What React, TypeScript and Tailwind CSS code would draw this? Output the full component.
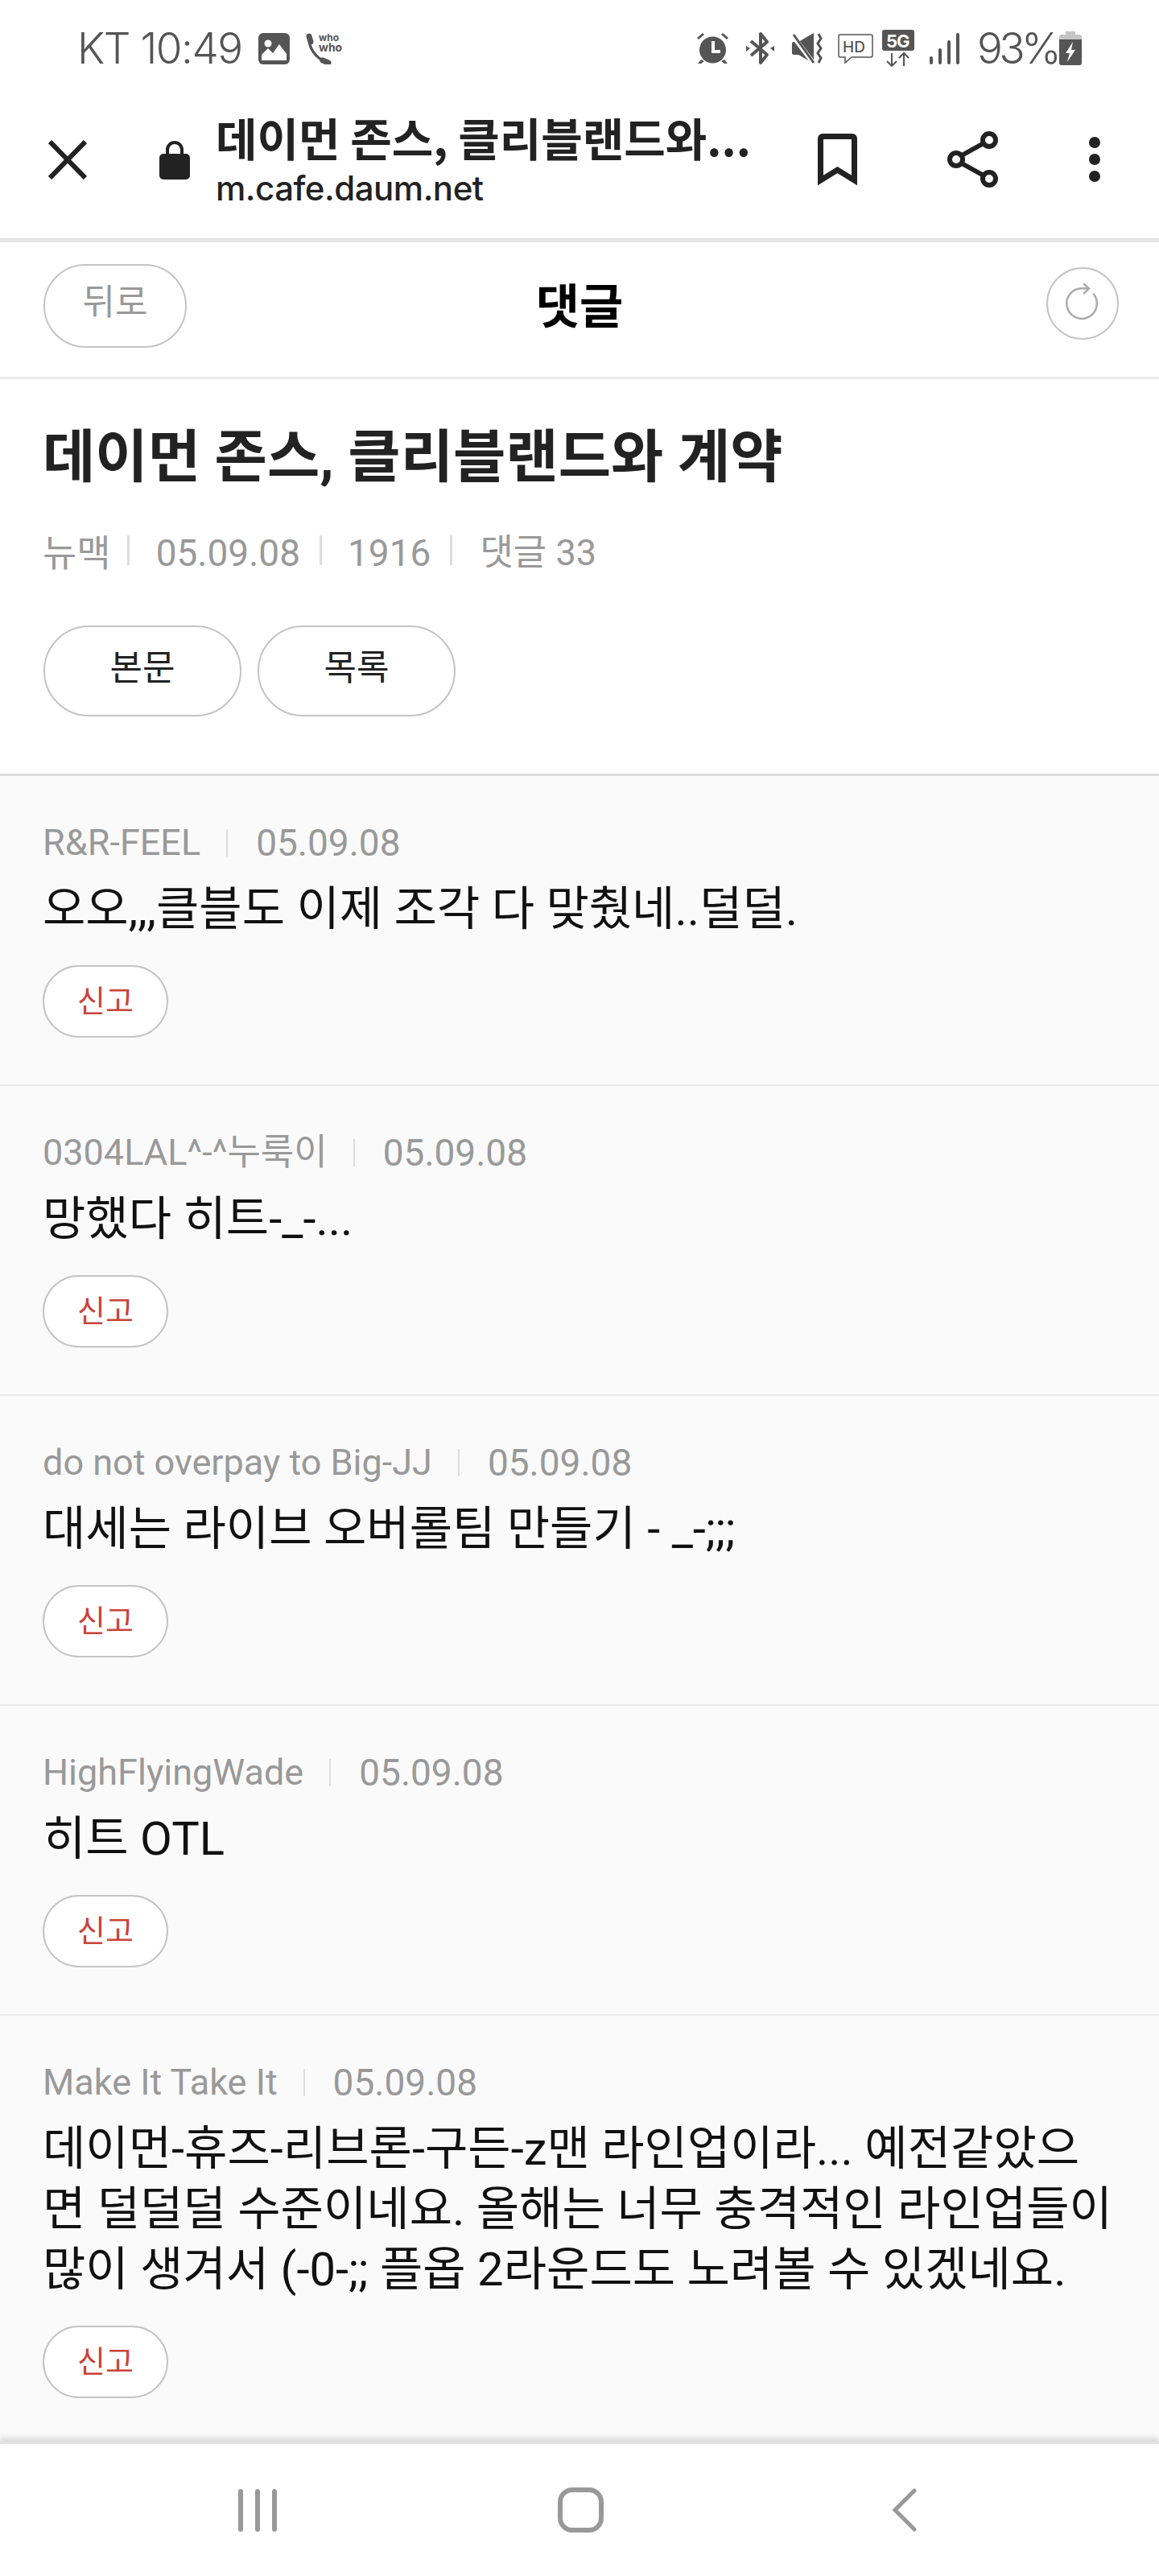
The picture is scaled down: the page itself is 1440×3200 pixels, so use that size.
const kr = "font-['Roboto','Noto_Sans_CJK_KR',sans-serif]";

interface Comment {
  author: string;
  body: string[];
}

const comments: Comment[] = [
  { author: "R&R-FEEL", body: ["오오,,,클블도 이제 조각 다 맞췄네..덜덜."] },
  { author: "0304LAL^-^누룩이", body: ["망했다 히트-_-..."] },
  { author: "do not overpay to Big-JJ", body: ["대세는 라이브 오버롤팀 만들기 - _-;;;"] },
  { author: "HighFlyingWade", body: ["히트 OTL"] },
  {
    author: "Make It Take It",
    body: [
      "데이먼-휴즈-리브론-구든-z맨 라인업이라... 예전같았으",
      "면 덜덜덜 수준이네요. 올해는 너무 충격적인 라인업들이",
      "많이 생겨서 (-0-;; 플옵 2라운드도 노려볼 수 있겠네요.",
    ],
  },
];

function StatusBar() {
  return (
    <div className="flex h-[118px] items-center justify-between pl-[96px] pr-[96px] pt-[2px] font-['Inter','Noto_Sans_CJK_KR',sans-serif] text-[#555]">
      <div className="flex items-center">
        <span className="w-[202px] whitespace-nowrap text-[53px] font-light leading-none tracking-[-1.5px]">KT 10:49</span>
        {/* gallery */}
        <svg className="ml-[23px]" width="39" height="39" viewBox="0 0 39 39" fill="#555">
          <rect width="39" height="39" rx="6" />
          <circle cx="12" cy="13" r="4.5" fill="#fff" />
          <path d="M4 34V27l8-8 6 6 8-11 9 12v8z" fill="#fff" />
        </svg>
        {/* whowho */}
        <svg className="ml-[20px]" width="50" height="40" viewBox="0 0 50 40" fill="none" stroke="#555">
          <path d="M5 6C2 18 12 32 25 37" strokeWidth="3.5" />
          <path d="M4 5l2 7M21 35l7 3" strokeWidth="7" strokeLinecap="round" />
          <text x="16" y="11" fontSize="12" fontWeight="700" fill="#555" stroke="none">who</text>
          <text x="16" y="24" fontSize="14" fontWeight="700" fill="#555" stroke="none">who</text>
        </svg>
      </div>
      <div className="flex items-center">
        {/* alarm */}
        <svg width="41" height="40" viewBox="0 0 41 40" fill="#555">
          <circle cx="20.5" cy="22" r="16.5" />
          <path d="M19 11h4v11h7v4H19z" fill="#fff" />
          <path d="M1 7l7-6 2 2-7 6zM40 7l-7-6-2 2 7 6zM6 34l-4 5h4l4-3zM35 34l4 5h-4l-4-3z" />
        </svg>
        {/* bluetooth */}
        <svg className="ml-[21px]" width="35" height="42" viewBox="0 0 35 42" fill="#555">
          <path d="M6 12l20 17-8 10V3l8 10L6 30" fill="none" stroke="#555" strokeWidth="4" strokeLinejoin="round" />
          <path d="M0 18l5 3-5 4zM35 18l-5 3 5 4z" />
        </svg>
        {/* mute / vibrate */}
        <svg className="ml-[22px]" width="39" height="38" viewBox="0 0 39 38" fill="#555">
          <path d="M0 13a2 2 0 0 1 2-2h6L27 0v38L8 27H2a2 2 0 0 1-2-2z" />
          <path d="M0 2l27 36" stroke="#fff" strokeWidth="6" />
          <path d="M2 2l25 35" stroke="#555" strokeWidth="3" />
          <path d="M33 1l3 6-4 6 4 6-4 6 4 6-3 6" fill="none" stroke="#555" strokeWidth="3" />
        </svg>
        {/* hd */}
        <svg className="ml-[18px]" width="44" height="37" viewBox="0 0 44 37" fill="none" stroke="#555" strokeWidth="1.5">
          <path d="M3 1h38a2 2 0 0 1 2 2v24a2 2 0 0 1-2 2H17l-8 7v-7H3a2 2 0 0 1-2-2V3a2 2 0 0 1 2-2z" />
          <text x="6" y="23" fontSize="19" fontWeight="500" fill="#555" stroke="none">HD</text>
        </svg>
        {/* 5g */}
        <svg className="ml-[11px]" width="40" height="46" viewBox="0 0 40 46" fill="#555">
          <rect width="40" height="26" rx="3" />
          <text x="5" y="22" fontSize="22" fontWeight="700" fill="#fff" letterSpacing="-1">5G</text>
          <path d="M12 29v16M6 39l6 6 6-6M27 45V29M21 35l6-6 6 6" fill="none" stroke="#555" strokeWidth="2" />
        </svg>
        <div className="ml-[19px] flex h-[39px] items-end gap-[7px]">
          <span className="h-[10px] w-[4px] rounded-full bg-[#555]" />
          <span className="h-[20px] w-[4px] rounded-full bg-[#555]" />
          <span className="h-[30px] w-[4px] rounded-full bg-[#555]" />
          <span className="h-[39px] w-[4px] rounded-full bg-[#555]" />
        </div>
        <span className="ml-[22px] w-[94px] whitespace-nowrap text-[53px] font-light leading-none tracking-[-4.5px]">93%</span>
        {/* battery */}
        <svg className="ml-[8px]" width="28" height="42" viewBox="0 0 28 42" fill="#555">
          <path d="M8 0h12v4h5a3 3 0 0 1 3 3v4H0V7a3 3 0 0 1 3-3h5z" fill="#c4c4c4" />
          <path d="M0 10h28v29a3 3 0 0 1-3 3H3a3 3 0 0 1-3-3z" />
          <path d="M17 13L8 27h5l-3 11 10-15h-5z" fill="#fff" />
        </svg>
      </div>
    </div>
  );
}

function BrowserBar() {
  return (
    <div className="flex h-[183px] items-center border-b-[5px] border-[#e4e4e4] pb-[18px] text-[#222]">
      <svg className="ml-[60px] shrink-0" width="48" height="49" viewBox="0 0 48 49" fill="none" stroke="#222" strokeWidth="6">
        <path d="M2 2l44 45M46 2L2 47" />
      </svg>
      <svg className="ml-[90px] shrink-0" width="38" height="49" viewBox="0 0 38 49" fill="#222">
        <path d="M10 20v-8a9 9 0 0 1 18 0v8" fill="none" stroke="#222" strokeWidth="4" />
        <rect y="17" width="38" height="32" rx="5" />
      </svg>
      <div className="ml-[32px] w-[700px] shrink-0">
        <div className="whitespace-nowrap font-['Noto_Sans_CJK_KR',sans-serif] text-[56px] font-bold leading-[66px]">데이먼 존스, 클리블랜드와...</div>
        <div className="mt-[6px] font-['Inter',sans-serif] text-[42px] font-medium leading-[50px] tracking-[-0.5px]">m.cafe.daum.net</div>
      </div>
      <svg className="ml-[48px] shrink-0" width="49" height="64" viewBox="0 0 49 64" fill="none" stroke="#222" strokeWidth="7">
        <path d="M3.500 58V6a2.500 2.500 0 0 1 2.500-2.500h37a2.500 2.500 0 0 1 2.500 2.500v52L24.500 45z" />
      </svg>
      <svg className="ml-[112px] shrink-0" width="63" height="70" viewBox="0 0 63 70" fill="none" stroke="#222" strokeWidth="6">
        <circle cx="52" cy="11" r="8" />
        <circle cx="11" cy="35" r="8" />
        <circle cx="52" cy="59" r="8" />
        <path d="M18 30l27-15M18 40l27 15" />
      </svg>
      <div className="ml-[113px] flex flex-col gap-[7px]">
        <span className="h-[14px] w-[14px] rounded-full bg-[#222]" />
        <span className="h-[14px] w-[14px] rounded-full bg-[#222]" />
        <span className="h-[14px] w-[14px] rounded-full bg-[#222]" />
      </div>
    </div>
  );
}

function CommentRow({ comment }: { comment: Comment }) {
  return (
    <div className="border-b-2 border-[#ececec] px-[53px] pt-[58px] pb-[58px] last:border-b-0">
      <div className={`flex items-center text-[46px] leading-[50px] text-[#999] ${kr}`}>
        <span className="text-[45px]">{comment.author}</span>
        <span className="ml-[32px] mr-[35px] h-[34px] w-[2px] bg-[#ddd]" />
        <span>05.09.08</span>
      </div>
      <div className={`mt-[20px] whitespace-nowrap text-[58px] leading-[75px] text-[#111] ${kr}`}>
        {comment.body.map((line) => (
          <div key={line}>{line}</div>
        ))}
      </div>
      <button className={`mt-[32px] flex h-[90px] w-[156px] items-center justify-center rounded-[45px] border-2 border-[#c4c4c4] bg-white text-[38px] text-[#c9443c] ${kr}`}>
        신고
      </button>
    </div>
  );
}

export default function App() {
  return (
    <div className="flex h-[3200px] w-[1440px] flex-col overflow-hidden bg-white">
      <StatusBar />
      <BrowserBar />

      <div className="relative flex h-[170px] items-center justify-center border-b-[3px] border-[#ebebeb] pb-[4px]">
        <button className={`absolute left-[54px] top-[27px] h-[104px] w-[178px] rounded-[52px] border-2 border-[#c4c4c4] pb-[8px] text-[44px] text-[#999] ${kr}`}>뒤로</button>
        <span className={`text-[59px] font-bold text-black ${kr}`}>댓글</span>
        <div className="absolute left-[1300px] top-[31px] flex h-[90px] w-[90px] items-center justify-center rounded-full border-2 border-[#c4c4c4]">
          <svg width="46" height="50" viewBox="0 2 46 50" fill="none" stroke="#aaa" strokeWidth="2.500">
            <path d="M36.300 14.700A18.800 18.800 0 1 1 23 8.200H30" />
            <path d="M24 2l7 6.500-7 6.500" />
          </svg>
        </div>
      </div>

      <div className="border-b-[3px] border-[#dcdcdc] px-[53px] pb-[71px] pt-[54px]">
        <h1 className={`whitespace-nowrap text-[71px] font-bold leading-[86px] text-[#222] ${kr}`}>데이먼 존스, 클리블랜드와 계약</h1>
        <div className={`mt-[48px] flex items-center text-[46px] leading-[56px] text-[#999] ${kr}`}>
          <span>뉴맥</span>
          <span className="mb-[8px] ml-[20px] mr-[33px] h-[37px] w-[3px] bg-[#ddd]" />
          <span>05.09.08</span>
          <span className="mb-[8px] ml-[24px] mr-[32px] h-[37px] w-[3px] bg-[#ddd]" />
          <span>1916</span>
          <span className="mb-[8px] ml-[24px] mr-[34px] h-[37px] w-[3px] bg-[#ddd]" />
          <span className="text-[45px]">댓글 33</span>
        </div>
        <div className="mt-[62px] ml-[1px] flex gap-[20px]">
          <button className={`h-[113px] w-[246px] rounded-[57px] border-2 border-[#c4c4c4] pb-[8px] text-[44px] text-[#222] ${kr}`}>본문</button>
          <button className={`h-[113px] w-[246px] rounded-[57px] border-2 border-[#c4c4c4] pb-[8px] text-[44px] text-[#222] ${kr}`}>목록</button>
        </div>
      </div>

      <div className="min-h-0 flex-1 bg-[#fafafa]">
        {comments.map((c) => (
          <CommentRow key={c.author} comment={c} />
        ))}
      </div>

      <div className="relative flex h-[168px] items-center border-t-4 border-[#e2e2e2] bg-white pl-[296px] shadow-[0_-4px_6px_rgba(0,0,0,0.12)]">
        <div className="flex gap-[15px]">
          <span className="h-[53px] w-[6px] rounded-full bg-[#999]" />
          <span className="h-[53px] w-[6px] rounded-full bg-[#999]" />
          <span className="h-[53px] w-[6px] rounded-full bg-[#999]" />
        </div>
        <span className="ml-[349px] h-[56px] w-[57px] rounded-[18px] border-[6px] border-[#999]" />
        <svg className="ml-[358px]" width="31" height="54" viewBox="0 0 31 54" fill="none" stroke="#999" strokeWidth="5" strokeLinecap="round">
          <path d="M28 3L4 27l24 24" />
        </svg>
      </div>
    </div>
  );
}
